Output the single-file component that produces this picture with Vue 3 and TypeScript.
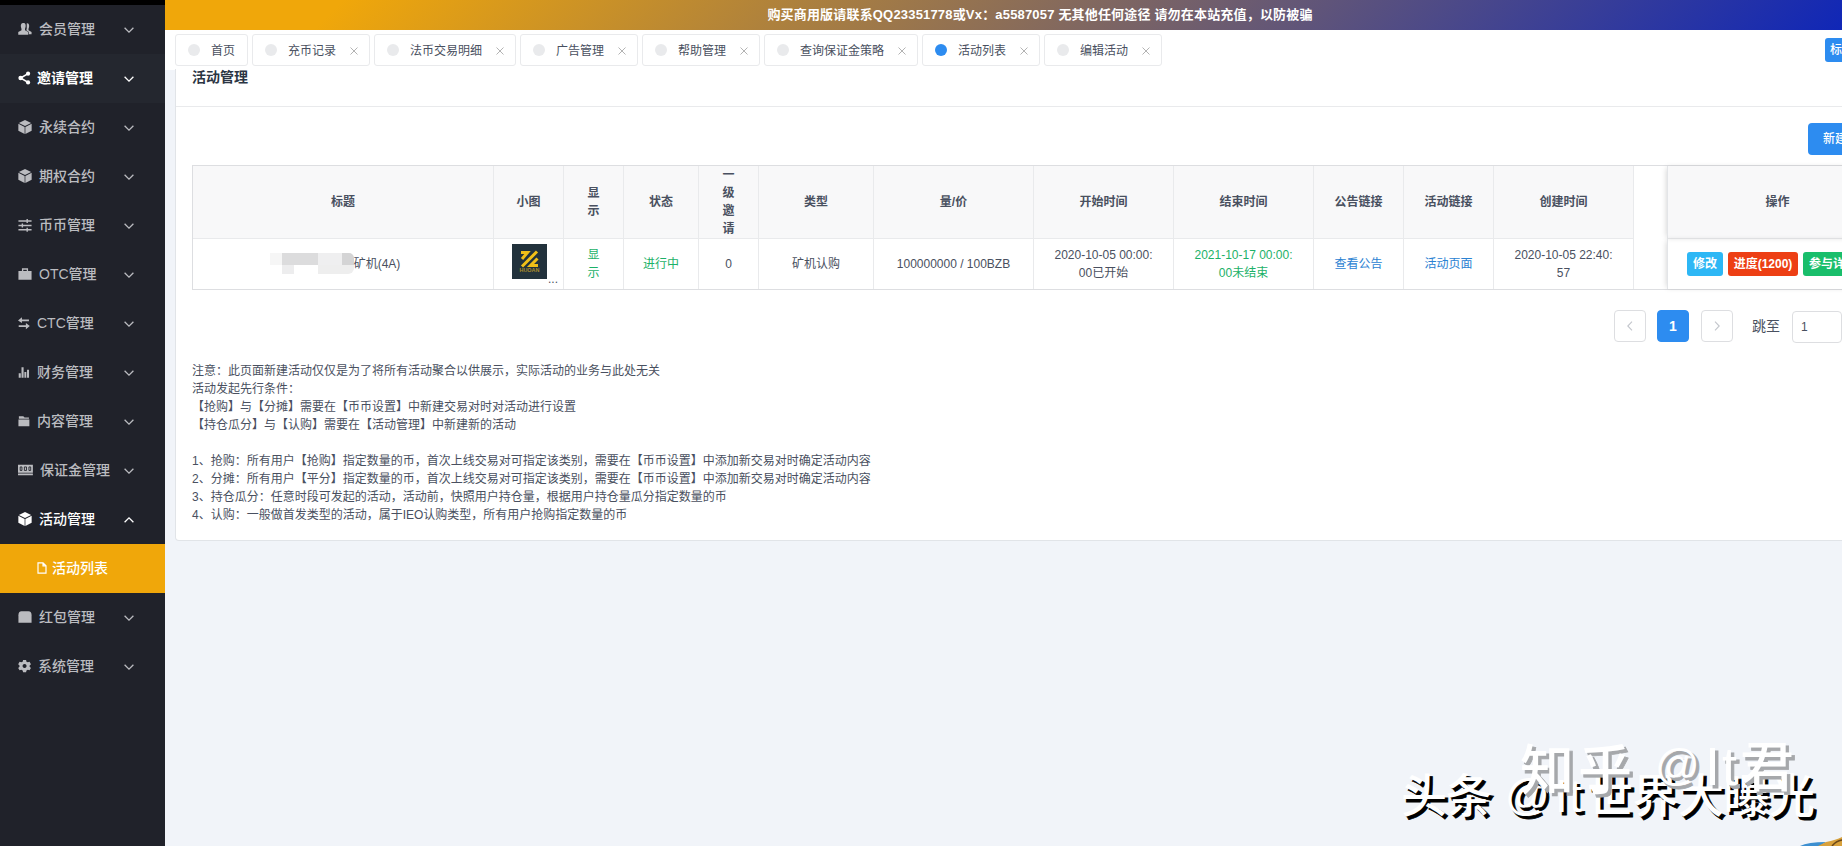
<script setup lang="ts">
interface MenuItem { icon: string; label: string; gap: number; lit?: boolean; open?: boolean }
interface Tab { label: string; active?: boolean; closable: boolean }

const cube = '<path d="M8 0 15 3.300 8 6.800 1 3.300zM.4 4.300 7.600 7.900V16L.4 12.400zM15.600 4.300 8.400 7.900V16L15.600 12.400z"/>'
const menu: MenuItem[] = [
  { label: '会员管理', gap: 7, icon: '<path d="M10 1.500C12.500 1.200 13 3.500 12.700 5.500L12 8V9.300L15.500 11.500V14H12.500V11.500L9.500 9.500 10 7.500z"/><path d="M6 1C8.800 1 9 3.500 8.700 5.500L8 8V9.300L11.800 11.500V14.500H.3V11.500L4 9.300V8L3.300 5.500C3 3 3.500 1 6 1z"/>' },
  { label: '邀请管理', gap: 5, lit: true, icon: '<circle cx="3" cy="8" r="2.6"/><circle cx="11.5" cy="3" r="2.4"/><circle cx="11.5" cy="13" r="2.4"/><path d="M3 8 11.5 3M3 8l8.500 5" fill="none" stroke="currentColor" stroke-width="1.8"/>' },
  { label: '永续合约', gap: 7, icon: cube },
  { label: '期权合约', gap: 7, icon: cube },
  { label: '币币管理', gap: 7, icon: '<path d="M.5 3.500H15.500M.5 8.500H15.500M.5 13.500H15.500M10.500 1.200v4.600M5 6.200v4.600M10.500 11.200v4.600" fill="none" stroke="currentColor" stroke-width="1.600"/>' },
  { label: 'OTC管理', gap: 7, icon: '<path d="M.5 4.500H15.500V14.500H.5zM4.500 5V1.500H11.500V5H10V3H6V5z"/>' },
  { label: 'CTC管理', gap: 5, icon: '<path d="M0 5 4.500 1.500V4H12.500V6H4.500V8zM13.500 11.500 9 8V10.500H.8V12.500H9V15z"/>' },
  { label: '财务管理', gap: 5, icon: '<path d="M.8 9.500H3.200V14.500H.8zM4 2.500H6.400V14.500H4zM7.300 8H9.500V14.500H7.300zM10.300 5.500H12.600V14.500H10.300z"/>' },
  { label: '内容管理', gap: 5, icon: '<path d="M1 2.500H6L7.500 4H12.500V5.500H1zM.5 6.200H13V14H.5z"/>' },
  { label: '保证金管理', gap: 8, icon: '<path d="M0 2H17V11H0zM0 12H17V14H0z"/><path d="M2.500 4.500h2v4h-2zM7.300 4.500h2.400v4H7.300zM12.500 4.500h2v4h-2z" fill="none" stroke="#20222a" stroke-width="1"/>' },
  { label: '活动管理', gap: 7, lit: true, open: true, icon: cube },
  { label: '红包管理', gap: 7, icon: '<path d="M.5 6Q.5 1.500 4 1.500H12Q15.500 1.500 15.500 6V14.500H.5z"/>' },
  { label: '系统管理', gap: 6, icon: '<path fill-rule="evenodd" d="M5.800 1h3.400l.5 2 1.500.8 2-.6 1.600 2.800-1.500 1.400v1.400l1.500 1.400-1.600 2.700-2-.5-1.500.8-.5 2H5.800l-.5-2-1.500-.8-2 .5L.2 10.200l1.500-1.400V7.400L.2 6l1.600-2.800 2 .6L5.300 3zM7.500 5.800a2.300 2.300 0 1 0 .01 0z"/>' },
]
const tabs: Tab[] = [
  { label: '首页', closable: false },
  { label: '充币记录', closable: true },
  { label: '法币交易明细', closable: true },
  { label: '广告管理', closable: true },
  { label: '帮助管理', closable: true },
  { label: '查询保证金策略', closable: true },
  { label: '活动列表', closable: true, active: true },
  { label: '编辑活动', closable: true },
]
const heads: string[] = ['标题', '小图', '显示', '状态', '一级邀请', '类型', '量/价', '开始时间', '结束时间', '公告链接', '活动链接', '创建时间']
const notes: string[] = [
  '注意：此页面新建活动仅仅是为了将所有活动聚合以供展示，实际活动的业务与此处无关',
  '活动发起先行条件：',
  '【抢购】与【分摊】需要在【币币设置】中新建交易对时对活动进行设置',
  '【持仓瓜分】与【认购】需要在【活动管理】中新建新的活动',
  '',
  '1、抢购：所有用户【抢购】指定数量的币，首次上线交易对可指定该类别，需要在【币币设置】中添加新交易对时确定活动内容',
  '2、分摊：所有用户【平分】指定数量的币，首次上线交易对可指定该类别，需要在【币币设置】中添加新交易对时确定活动内容',
  '3、持仓瓜分：任意时段可发起的活动，活动前，快照用户持仓量，根据用户持仓量瓜分指定数量的币',
  '4、认购：一般做首发类型的活动，属于IEO认购类型，所有用户抢购指定数量的币',
]
</script>

<template>
  <div class="app">
    <aside class="side">
      <template v-for="m in menu" :key="m.label">
        <div class="item" :class="{ lit: m.lit, hover: m.lit && !m.open }">
          <svg class="mi" :class="'g' + m.gap" viewBox="0 0 16 16" fill="currentColor" v-html="m.icon"></svg>
          <span class="ml">{{ m.label }}</span>
          <svg class="chev" :class="{ up: m.open }" viewBox="0 0 10 6"><path d="M.6.7 5 5.100 9.400.7" /></svg>
        </div>
        <div v-if="m.open" class="sub">
          <svg class="doc" viewBox="0 0 10 12"><path d="M1 .8H6L9 3.800V11.200H1zM6 .8V3.800H9" /></svg>
          <span>活动列表</span>
        </div>
      </template>
    </aside>

    <div class="main">
      <header class="banner"><span>购买商用版请联系QQ23351778或Vx：a5587057 无其他任何途径 请勿在本站充值，以防被骗</span></header>
      <nav class="tabs">
        <div v-for="t in tabs" :key="t.label" class="tab">
          <i class="dot" :class="{ on: t.active }"></i>
          <span>{{ t.label }}</span>
          <svg v-if="t.closable" class="x" viewBox="0 0 8 8"><path d="M.5.5 7.500 7.500M7.500.5.5 7.500" /></svg>
        </div>
        <button class="tagbtn">标签选项</button>
      </nav>

      <section class="card">
        <h2>活动管理</h2>
        <div class="body">
          <div class="tools"><button class="new">新建活动</button></div>
          <div class="table">
            <div class="row head">
              <div v-for="h in heads" :key="h" class="cell">{{ h }}</div>
              <div class="void"></div>
              <div class="fixed">操作</div>
            </div>
            <div class="row data">
              <div class="cell title">
                <span class="mask"><i class="a"></i><i class="b"></i><i class="c"></i><i class="d"></i><i class="e"></i><i class="f"></i></span><span>矿机(4A)</span>
              </div>
              <div class="cell thumb">
                <svg class="logo" viewBox="0 0 35 35">
                  <rect width="35" height="35" fill="#22323c" />
                  <path d="M9 8.500H15.500L10 15M25 7.500 10 22.500M25.500 14.500 18.500 21.500H26" fill="none" stroke="#f0bf18" stroke-width="3" />
                  <text x="17.500" y="28" textLength="20" lengthAdjust="spacingAndGlyphs">HUOAN</text>
                </svg>
                <span class="dots">...</span>
              </div>
              <div class="cell green">显示</div>
              <div class="cell green">进行中</div>
              <div class="cell">0</div>
              <div class="cell">矿机认购</div>
              <div class="cell">100000000 / 100BZB</div>
              <div class="cell">2020-10-05 00:00:<br />00已开始</div>
              <div class="cell green">2021-10-17 00:00:<br />00未结束</div>
              <div class="cell link">查看公告</div>
              <div class="cell link">活动页面</div>
              <div class="cell">2020-10-05 22:40:<br />57</div>
              <div class="void"></div>
              <div class="fixed acts">
                <button class="info">修改</button><button class="err">进度(1200)</button><button class="ok">参与详情</button>
              </div>
            </div>
          </div>
          <div class="pager">
            <span class="pg first"><svg viewBox="0 0 6 10"><path d="M5 .7.8 5 5 9.300" /></svg></span>
            <span class="pg cur">1</span>
            <span class="pg"><svg viewBox="0 0 6 10"><path d="M1 .7 5.200 5 1 9.300" /></svg></span>
            <span class="jump">跳至</span>
            <span class="inp">1</span>
          </div>
          <div class="notes"><p v-for="(n, i) in notes" :key="i">{{ n }}</p></div>
        </div>
      </section>
    </div>

    <svg class="marks" viewBox="0 0 450 126">
      <g class="m1">
        <g v-for="k in ['sh', 'fg']" :key="k" :class="k">
          <text x="9" y="92" textLength="91">头条</text>
          <text class="at" x="113" y="90">@</text>
          <text class="it" x="163" y="92" textLength="27">It</text>
          <text x="195" y="92" textLength="228">世界大曝光</text>
        </g>
      </g>
      <g class="m2">
        <g v-for="k in ['sh', 'fg']" :key="k" :class="k">
          <text x="128" y="70" textLength="112">知乎</text>
          <text class="at" x="263" y="60">@</text>
          <text class="it" x="313" y="65" textLength="32">It</text>
          <text x="348" y="67">君</text>
        </g>
      </g>
      <path d="M408 126Q416 122 434 122L428 126z" fill="#3d8fd0" />
      <path d="M426 126 434 122Q444 120 450 117V126z" fill="#d8a13c" />
      <path d="M440 126Q444 121 450 120" fill="none" stroke="#6b4718" stroke-width="1.500" />
    </svg>
  </div>
</template>

<style>
body { margin: 0; overflow: hidden; }
</style>

<style scoped>
* { box-sizing: border-box; }
.app { position: relative; display: flex; width: 1842px; height: 846px; overflow: hidden; background: #f1f4f9; font: 12px/18px "Liberation Sans", "Noto Sans CJK SC", sans-serif; color: #495060; }
.side { flex: none; width: 165px; height: 846px; background: #20222a; border-top: 5px solid #000; color: #bbbcc0; font-size: 14px; }
.item { display: flex; align-items: center; height: 49px; padding: 0 31px 2px 18px; font-weight: 500; }
.item.lit { color: #fff; }
.item.hover { background: #24272f; font-weight: 700; }
.mi { width: 14px; height: 14px; flex: none; overflow: visible; }
.g5 { margin-right: 5px; }
.g6 { margin-right: 6px; }
.g7 { margin-right: 7px; }
.g8 { margin-right: 8px; }
.ml { flex: 1; white-space: nowrap; }
.chev { width: 10px; height: 6px; margin-top: 2px; overflow: visible; fill: none; stroke: currentColor; stroke-width: 1.3; }
.up { transform: rotate(180deg); }
.sub { display: flex; align-items: center; gap: 5px; height: 49px; padding: 0 0 2px 37px; background: #f0a70a; color: #fff; font-weight: 500; }
.doc { width: 10px; height: 12px; fill: none; stroke: #fff; stroke-width: 1.2; }

.main { flex: 1; min-width: 0; overflow: hidden; }
.banner { display: flex; align-items: center; justify-content: center; height: 30px; width: 1750px; background: linear-gradient(135deg, #f0a70a 10%, #0d25b9 97%); }
.banner span { color: #fff; font-size: 13px; font-weight: 700; letter-spacing: .18px; white-space: nowrap; }
.tabs { display: flex; gap: 4px; width: 1750px; height: 40px; padding: 4px 0 0 10px; background: #fff; }
.tab { flex: none; display: flex; align-items: center; height: 32px; padding: 1px 11px 0 12px; border: 1px solid #e9eaec; border-radius: 3px; background: #fff; }
.tab span { margin-right: 1px; }
.dot { width: 12px; height: 12px; margin: -1px 11px 0 0; border-radius: 50%; background: #e9eaec; }
.dot.on { background: #2d8cf0; }
.x { width: 8px; height: 8px; margin-left: 13px; fill: none; stroke: #b3b3b3; stroke-width: 1; }
button { border: 0; padding: 0; color: #fff; font: 500 12px/18px "Liberation Sans", "Noto Sans CJK SC", sans-serif; border-radius: 3px; white-space: nowrap; }
.tagbtn { flex: none; width: 80px; height: 24px; margin: 4px 10px 0 auto; padding: 0 5px; background: #2d8cf0; text-align: left; }

.card { width: 1727px; height: 472px; margin: -1px 0 0 10px; background: #fff; border: 1px solid #e1e4e8; border-top: 0; border-radius: 0 0 4px 4px; }
h2 { margin: 0; height: 38px; padding: 0 16px; border-bottom: 1px solid #e9eaec; font-size: 14px; line-height: 16px; font-weight: 700; color: #2b3543; }
.body { padding: 16px 0 0 16px; }
.tools { display: flex; height: 42px; padding-left: 1616px; }
.new { width: 90px; height: 32px; padding: 0 15px; border-radius: 4px; background: #2d8cf0; text-align: left; }
.table { width: 1695px; border: 1px solid #dddee1; border-right: 0; }
.row { display: grid; grid-template-columns: 301px 70px 60px 75px 60px 115px 160px 140px 140px 90px 90px 140px 33px 220px; }
.head { height: 73px; font-weight: 700; }
.head .cell, .head .fixed { background: #f8f8f9; border-bottom: 1px solid #e9eaec; }
.data { height: 50px; }
.cell { display: flex; align-items: center; justify-content: center; padding: 0 18px; border-right: 1px solid #e9eaec; text-align: center; line-height: 18px; word-break: break-all; }
.cell:nth-child(2), .cell:nth-child(4) { padding: 0 10px; }
.cell:nth-child(n+7) { padding: 0 4px; }
.green { color: #1cb168; }
.link { color: #2b82d2; }
.fixed { display: flex; align-items: center; justify-content: center; border-left: 1px solid #e3e5e8; box-shadow: -2px 0 6px -2px rgba(0, 0, 0, .2); }
.acts { justify-content: flex-start; gap: 5px; padding-left: 19px; }
.acts button { height: 24px; padding: 0 6px; font-weight: 700; }
.acts .err { width: 70px; padding: 0; }
.info { background: #2db7f5; }
.err { background: #ed3f14; }
.ok { background: #19be6b; }
.cell.title { padding: 0 31px 0 15px; }
.mask { display: grid; grid-template-columns: 12px 36px 24px 12px; grid-template-rows: 12px 9px; margin-top: -2px; }
.mask .a { background: #f6f6f6; }
.mask .b { background: #dcdcdd; }
.mask .c { background: #efeff0; }
.mask .d { background: #d4d4d5; border-radius: 0 5px 0 0; }
.mask .e { grid-column: 2; width: 12px; background: #ededee; }
.mask .f { grid-column: 3 / 5; background: #eee; border-radius: 0 0 6px 0; }
.thumb { position: relative; }
.logo { flex: none; width: 35px; height: 35px; margin: 0 0 6px 2px; }
.logo text { font: 700 5px "Liberation Sans", sans-serif; fill: #a98c2c; text-anchor: middle; }
.dots { position: absolute; right: 5px; bottom: 3px; line-height: 14px; }
.pager { display: flex; align-items: center; height: 32px; margin: 20px 0 0 1422px; }
.pg { flex: none; display: flex; align-items: center; justify-content: center; width: 32px; height: 32px; margin-right: 12px; border: 1px solid #dddee1; border-radius: 4px; }
.pg.first { margin-right: 11px; }
.pg svg { width: 6px; height: 10px; fill: none; stroke: #c3c6cc; stroke-width: 1.1; }
.cur { background: #2d8cf0; border-color: #2d8cf0; color: #fff; font-size: 14px; font-weight: 700; }
.jump { margin: 0 12px 0 7px; font-size: 14px; white-space: nowrap; }
.inp { flex: none; width: 50px; height: 32px; margin-top: 2px; padding: 6px 8px; border: 1px solid #dddee1; border-radius: 4px; }
.notes { margin-top: 20px; }
.notes p { margin: 0; height: 18px; white-space: pre; }

.marks { position: absolute; left: 1392px; top: 720px; width: 450px; height: 126px; font-family: "Liberation Sans", "Noto Sans CJK SC", sans-serif; font-weight: 500; }
.m1 { font-size: 46px; }
.m2 { font-size: 54px; }
.at { font-size: 44px; font-weight: 400; }
.it { font-weight: 400; }
.sh { fill: #000; stroke: #000; stroke-width: .8; transform: translate(3px, 3px); }
.m2 .sh { fill: #a6a8ab; stroke: #a6a8ab; }
.fg { fill: #fff; }
</style>
